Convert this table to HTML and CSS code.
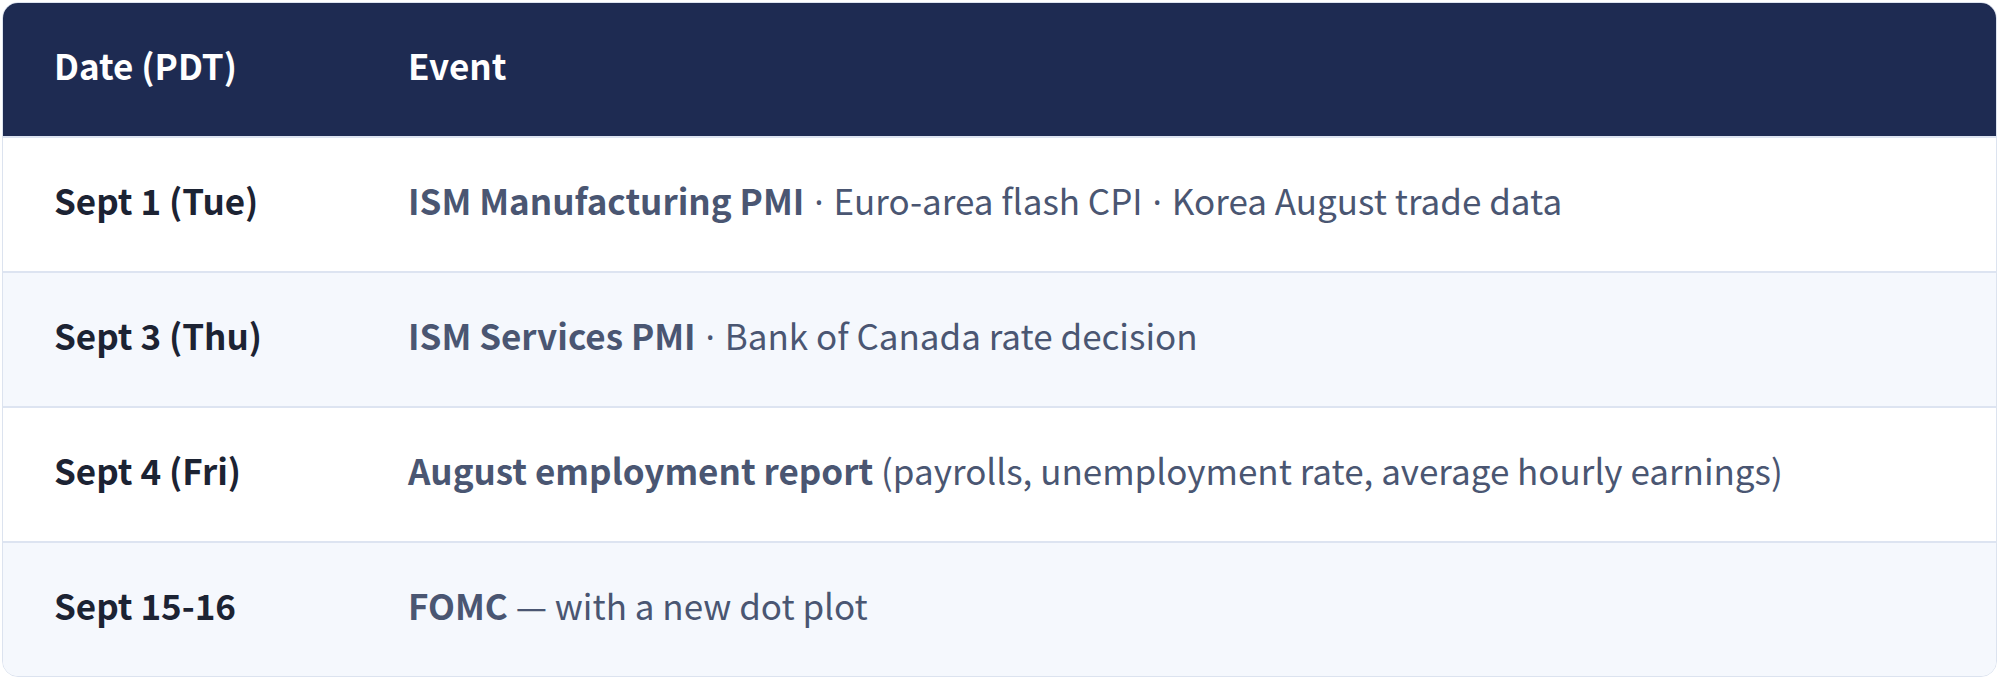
FILE: index.html
```html
<!DOCTYPE html>
<html lang="en">
<head>
<meta charset="utf-8">
<title>Schedule</title>
<link rel="stylesheet" href="styles.css">
</head>
<body>
<div class="wrap">
  <div class="card">
    <div class="row head">
      <div class="cell">Date (PDT)</div>
      <div class="cell">Event</div>
    </div>
    <div class="row">
      <div class="cell date">Sept 1 (Tue)</div>
      <div class="cell event"><strong>ISM Manufacturing PMI</strong> <span class="sep">·</span> Euro-area flash CPI <span class="sep">·</span> Korea August trade data</div>
    </div>
    <div class="row alt">
      <div class="cell date">Sept 3 (Thu)</div>
      <div class="cell event"><strong>ISM Services PMI</strong> <span class="sep">·</span> Bank of Canada rate decision</div>
    </div>
    <div class="row">
      <div class="cell date">Sept 4 (Fri)</div>
      <div class="cell event"><strong>August employment report</strong> (payrolls, unemployment rate, average hourly earnings)</div>
    </div>
    <div class="row alt">
      <div class="cell date">Sept 15-16</div>
      <div class="cell event"><strong>FOMC</strong> — with a new dot plot</div>
    </div>
  </div>
</div>
</body>
</html>
```

FILE: styles.css
```css
* { box-sizing: border-box; }
html, body { margin: 0; padding: 0; background: #ffffff; }
body {
  font-family: "Noto Sans CJK KR", "Noto Sans", "Liberation Sans", sans-serif;
}
.wrap {
  padding: 2px 3px 0 2px;
}
.card {
  border: 1px solid #dce3ef;
  border-radius: 16px;
  overflow: hidden;
  background: #ffffff;
}
.row {
  display: grid;
  grid-template-columns: 354px 1fr;
  align-items: center;
  padding-left: 51px;
  padding-bottom: 10px;
  height: 135px;
  border-top: 2px solid #dde4f1;
  font-size: 35px;
}
.row.alt { background: #f5f8fd; }
.row.head {
  height: 133px;
  border-top: 0;
  background: #1e2b52;
  color: #ffffff;
  font-weight: 700;
  font-size: 35px;
}
.cell { white-space: nowrap; }
.date {
  font-weight: 700;
  color: #1c2333;
}
.event {
  color: #4a5672;
}
.event strong { font-weight: 700; }
.sep {
  font-family: "Noto Sans", "Liberation Sans", sans-serif;
  margin: 0 2px;
}
```
